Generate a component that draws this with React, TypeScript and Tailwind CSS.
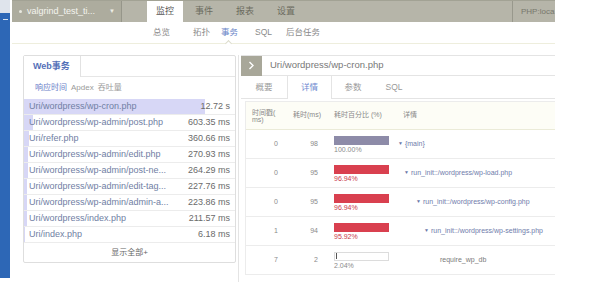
import React from "react";

const listRows: [string, string, number][] = [
  ["Uri/wordpress/wp-cron.php", "12.72 s", 12720],
  ["Uri/wordpress/wp-admin/post.php", "603.35 ms", 603.35],
  ["Uri/refer.php", "360.66 ms", 360.66],
  ["Uri/wordpress/wp-admin/edit.php", "270.93 ms", 270.93],
  ["Uri/wordpress/wp-admin/post-ne...", "264.29 ms", 264.29],
  ["Uri/wordpress/wp-admin/edit-tag...", "227.76 ms", 227.76],
  ["Uri/wordpress/wp-admin/admin-a...", "223.86 ms", 223.86],
  ["Uri/wordpress/index.php", "211.57 ms", 211.57],
  ["Uri/index.php", "6.18 ms", 6.18],
];

type TRow = {
  ts: string;
  cost: string;
  pctText: string;
  kind: "gray" | "red" | "empty";
  indent: number;
  label: string;
  arrow: boolean;
};

const tableRows: TRow[] = [
  { ts: "0", cost: "98", pctText: "100.00%", kind: "gray", indent: 4, label: "{main}", arrow: true },
  { ts: "0", cost: "95", pctText: "96.94%", kind: "red", indent: 10, label: "run_init::/wordpress/wp-load.php", arrow: true },
  { ts: "0", cost: "95", pctText: "96.94%", kind: "red", indent: 22, label: "run_init::/wordpress/wp-config.php", arrow: true },
  { ts: "1", cost: "94", pctText: "95.92%", kind: "red", indent: 30, label: "run_init::/wordpress/wp-settings.php", arrow: true },
  { ts: "7", cost: "2", pctText: "2.04%", kind: "empty", indent: 46, label: "require_wp_db", arrow: false },
];

export default function App() {
  return (
    <div className="w-[590px] h-[293px] bg-white flex font-['Liberation_Sans','Noto_Sans_CJK_SC',sans-serif] overflow-hidden">
      {/* left blue strip */}
      <div className="w-[10px] h-[278px] flex flex-col">
        <div className="h-[13px] bg-[#dfe4ec]" />
        <div className="flex-1 bg-[#2d67b6] flex flex-col items-center pt-[6px]">
          <div className="w-[5px] h-[1px] bg-white/80" />
        </div>
      </div>

      {/* main column */}
      <div className="ml-[2px] w-[543px] flex flex-col">
        {/* top bar */}
        <div className="h-[22px] flex bg-[#b6b5a9] border-t border-[#a2a294]">
          <div className="w-[110px] bg-[#adac9e] flex items-center pl-[7px] pr-[6px] border-r border-[#96968a]">
            <div className="w-[3px] h-[3px] rounded-full bg-[#e8e8e0]" />
            <span className="ml-[5px] text-[9px] text-[#f4f4ee]">valgrind_test_ti...</span>
            <span className="ml-auto text-[6px] text-[#eeeee6]">▼</span>
          </div>
          <div className="w-[25px]" />
          <div className="w-[36px] bg-white flex items-center justify-center text-[9px] text-[#555]">监控</div>
          <div className="w-[12px]" />
          <div className="w-[20px] flex items-center text-[9px] text-[#6c6c60]">事件</div>
          <div className="w-[21px]" />
          <div className="w-[20px] flex items-center text-[9px] text-[#6c6c60]">报表</div>
          <div className="w-[21px]" />
          <div className="w-[20px] flex items-center text-[9px] text-[#6c6c60]">设置</div>
          <div className="flex-1" />
          <div className="w-[43px] border-l border-[#98988c] flex items-center pl-[8px] text-[8px] text-[#77776c] whitespace-nowrap">
            PHP:loca
          </div>
        </div>

        {/* sub nav */}
        <div className="h-[22px] flex items-center border-b border-[#eeeedd] pl-[141px] text-[8.5px] text-[#8a8a8a]">
          <span className="w-[40px]">总览</span>
          <span className="w-[28px]">拓扑</span>
          <span className="w-[34px] relative text-[#6b86c8]">
            事务
            <span className="absolute left-[5px] top-[15px] w-[5px] h-[5px] rotate-45 bg-white border-l border-t border-[#dcdccc]" />
          </span>
          <span className="w-[31px]">SQL</span>
          <span>后台任务</span>
        </div>

        {/* body */}
        <div className="flex mt-[11px]">
          {/* left card */}
          <div className="ml-[11px] w-[213px] h-[208px] border border-[#dedede] rounded-[2px] flex flex-col">
            <div className="h-[21px] flex border-b border-[#e6e6e6]">
              <div className="w-[57px] bg-white border-r border-[#e2e2e2] -mb-[1px] flex items-center pl-[9px] text-[9px] font-bold text-[#5470b8]">
                Web事务
              </div>
            </div>
            <div className="h-[22px] flex items-center pl-[11px] gap-[4px] text-[8px] text-[#9a9a9a]">
              <span className="text-[#6a80c8]">响应时间</span>
              <span>Apdex</span>
              <span>吞吐量</span>
            </div>
            {listRows.map(([name, val, v], i) => (
              <div key={i} className="h-[16px] relative flex items-center border-b border-[#ececec] text-[9px]">
                <div
                  className="absolute left-0 top-0 bottom-0 bg-[#d7d7f6]"
                  style={{ width: `${(v / 12720) * 181}px` }}
                />
                <span className="relative pl-[5px] text-[#7080a4] whitespace-nowrap">{name}</span>
                <span className="relative ml-auto pr-[5px] text-[#6a6a6a] whitespace-nowrap">{val}</span>
              </div>
            ))}
            <div className="flex-1 flex items-center justify-center text-[8px] text-[#666]">显示全部+</div>
          </div>

          {/* right panel */}
          <div className="ml-[2px] w-[317px] h-[227px] border-l border-[#e4e4e4] flex flex-col">
            <div className="ml-[2px] h-[21px] flex items-center border-t border-b border-[#e4e4e4]">
              <div className="w-[21px] h-[20px] bg-[#a8a799] flex items-center justify-center">
                <svg width="7" height="9" viewBox="0 0 7 9">
                  <path d="M1.5 1 L5 4.5 L1.5 8" stroke="#fff" strokeWidth="1.4" fill="none" />
                </svg>
              </div>
              <span className="ml-[8px] text-[9.5px] text-[#787878]">Uri/wordpress/wp-cron.php</span>
            </div>
            <div className="ml-[2px] h-[23px] flex border-b border-[#e4e4e4] text-[8.5px] text-[#9a9a9a]">
              <div className="w-[46px] flex items-center justify-center">概要</div>
              <div className="w-[45px] flex items-center justify-center bg-white border-l border-r border-[#e4e4e4] -mb-[1px] text-[#6f8ad0]">
                详情
              </div>
              <div className="w-[42px] flex items-center justify-center">参数</div>
              <div className="w-[40px] flex items-center justify-center">SQL</div>
            </div>
            {/* table */}
            <div className="ml-[6px] mt-[2px] border-l border-t border-[#ececec] flex flex-col text-[7px]">
              <div className="h-[28px] flex items-center bg-[#fdfdf6] border-b border-[#ebebd8] text-[#8a8a8a]">
                <div className="w-[42px] pl-[6px] leading-[7px]">
                  时间戳(
                  <br />
                  ms)
                </div>
                <div className="w-[40px] pl-[5px]">耗时(ms)</div>
                <div className="w-[66px] pl-[6px]">耗时百分比 (%)</div>
                <div className="pl-[9px]">详情</div>
              </div>
              {tableRows.map((r, i) => (
                <div key={i} className="h-[29px] flex items-center border-b border-[#ececec]">
                  <div className="w-[42px] pr-[10px] text-right text-[#8a8a8a]">{r.ts}</div>
                  <div className="w-[40px] pr-[10px] text-right text-[#8a8a8a]">{r.cost}</div>
                  <div className="w-[66px] pl-[6px] flex flex-col">
                    {r.kind === "empty" ? (
                      <div className="w-[55px] h-[9px] border border-[#dcdcdc] bg-white flex items-center pl-[1px]">
                        <div className="w-[1px] h-[6px] bg-[#555]" />
                      </div>
                    ) : (
                      <div className={r.kind === "gray" ? "w-[55px] h-[9px] bg-[#8d8ba8]" : "w-[55px] h-[9px] bg-[#d9404f]"} />
                    )}
                    <span className={r.kind === "red" ? "mt-[1px] leading-[7px] text-[#c8384a]" : "mt-[1px] leading-[7px] text-[#8a8a8a]"}>
                      {r.pctText}
                    </span>
                  </div>
                  <div className="flex-1 flex items-center whitespace-nowrap" style={{ paddingLeft: `${r.indent}px` }}>
                    {r.arrow && <span className="text-[5px] text-[#6a78a8] mr-[2px]">▼</span>}
                    <span className={r.arrow ? "text-[#6f7cab]" : "text-[#7a7a7a]"}>{r.label}</span>
                  </div>
                </div>
              ))}
            </div>
          </div>
        </div>
      </div>
    </div>
  );
}
